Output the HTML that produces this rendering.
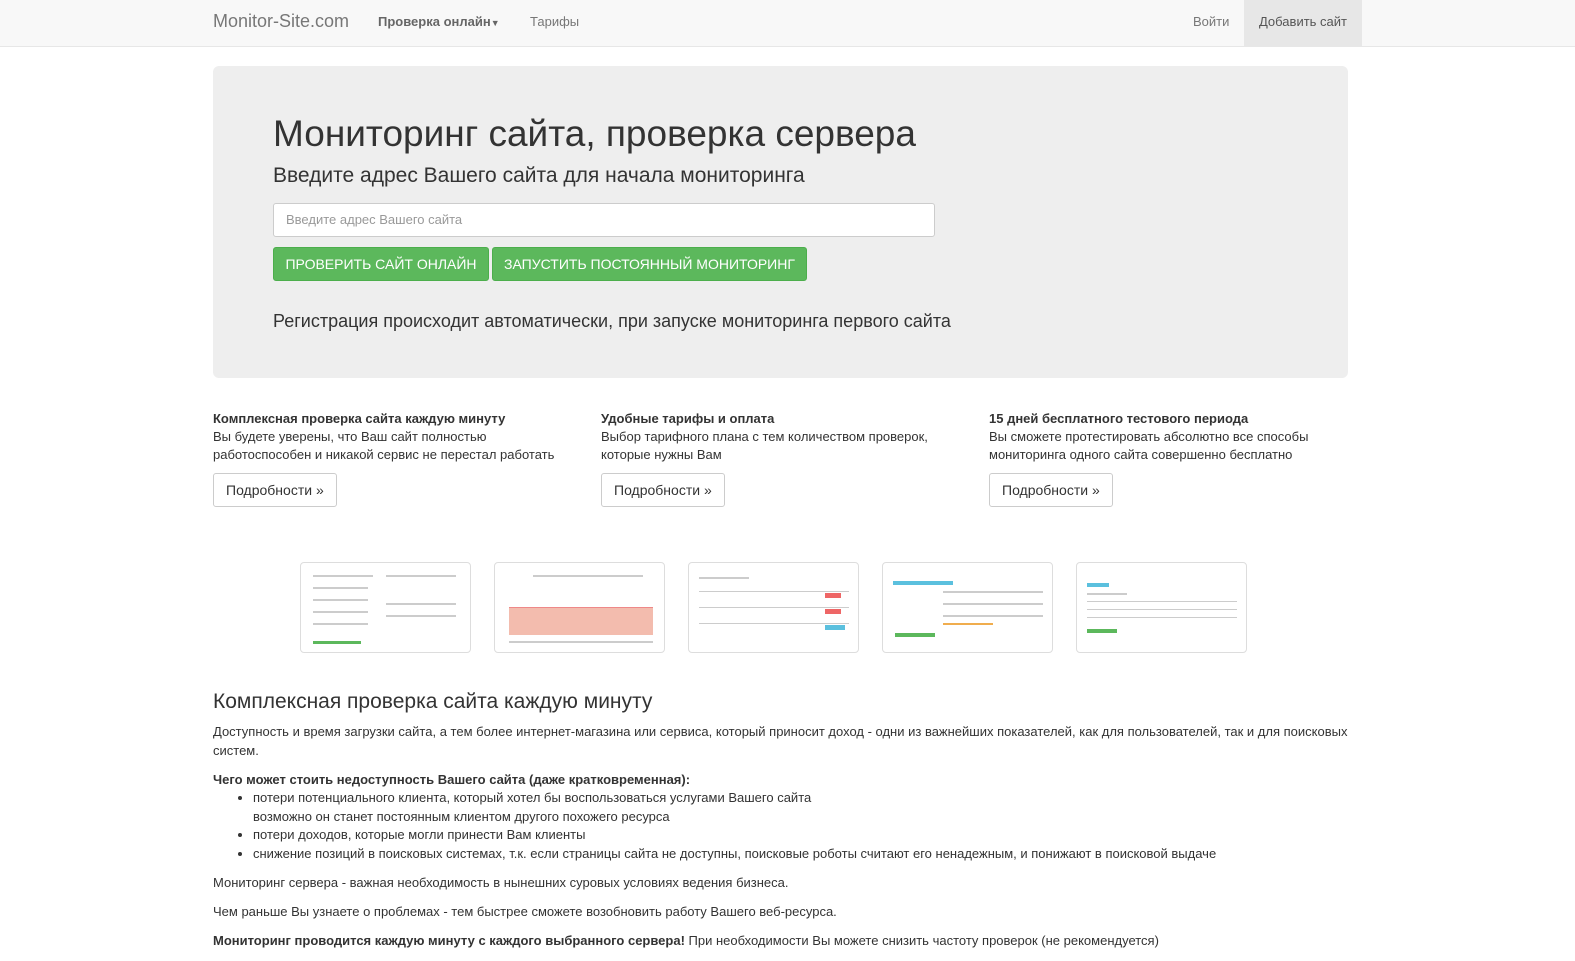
<!DOCTYPE html>
<html><head><meta charset="utf-8"><style>
*{box-sizing:border-box}
body{margin:0;font-family:"Liberation Sans",sans-serif;font-size:13px;line-height:18px;color:#333;background:#fff;width:1575px;height:938px;overflow:hidden}
.nav{height:47px;background:#f8f8f8;border-bottom:1px solid #e7e7e7;position:relative}
.nav a{position:absolute;top:0;line-height:43px;color:#777;text-decoration:none;font-size:13px}
.jumbo{position:absolute;left:213px;top:66px;width:1135px;height:312px;background:#eee;border-radius:6px}
h1{position:absolute;left:60px;top:45px;margin:0;font-size:37px;font-weight:normal;line-height:46px;color:#333}
.sub{position:absolute;left:60px;top:96px;font-size:21px;line-height:28px}
.inp{position:absolute;left:60px;top:137px;width:662px;height:34px;background:#fff;border:1px solid #ccc;border-radius:3px;padding:0 12px;line-height:32px;color:#999;font-size:13px}
.btn{position:absolute;top:181px;height:34px;background:#5cb85c;border:1px solid #4cae4c;border-radius:3px;color:#fff;font-size:14px;line-height:32px;text-align:center}
.reg{position:absolute;left:60px;top:243px;font-size:18px;line-height:24px}
.col{position:absolute;top:410px;width:370px}
.col b{display:block}
.col .b2{position:absolute;top:63px;left:0;height:34px;border:1px solid #ccc;border-radius:3px;padding:0 12px;line-height:32px;font-size:14px;background:#fff}
.th{position:absolute;top:562px;width:171px;height:91px;border:1px solid #ddd;border-radius:4px;background:#fff;overflow:hidden}
.th i{position:absolute;height:2px;background:#ccc;display:block}
h2{position:absolute;left:213px;top:688px;margin:0;font-size:21px;font-weight:normal;line-height:28px}
.txt{position:absolute;left:213px;top:723px;width:1140px;line-height:18.5px}
.txt p{margin:0 0 10.5px}
ul{margin:0;padding-left:40px}
</style></head><body>
<div class="nav">
<a style="left:213px;font-size:18px;color:#777">Monitor-Site.com</a>
<a style="left:378px;font-weight:bold;color:#666">Проверка онлайн<span style="font-size:9px">▼</span></a>
<a style="left:530px">Тарифы</a>
<a style="left:1193px">Войти</a>
<a style="left:1244px;width:118px;height:46px;background:#e7e7e7;text-align:center;color:#555">Добавить сайт</a>
</div>
<div class="jumbo">
<h1>Мониторинг сайта, проверка сервера</h1>
<div class="sub">Введите адрес Вашего сайта для начала мониторинга</div>
<div class="inp">Введите адрес Вашего сайта</div>
<div class="btn" style="left:60px;width:216px">ПРОВЕРИТЬ САЙТ ОНЛАЙН</div>
<div class="btn" style="left:279px;width:315px">ЗАПУСТИТЬ ПОСТОЯННЫЙ МОНИТОРИНГ</div>
<div class="reg">Регистрация происходит автоматически, при запуске мониторинга первого сайта</div>
</div>
<div class="col" style="left:213px"><b>Комплексная проверка сайта каждую минуту</b>Вы будете уверены, что Ваш сайт полностью работоспособен и никакой сервис не перестал работать<div class="b2">Подробности »</div></div>
<div class="col" style="left:601px"><b>Удобные тарифы и оплата</b>Выбор тарифного плана с тем количеством проверок, которые нужны Вам<div class="b2">Подробности »</div></div>
<div class="col" style="left:989px"><b>15 дней бесплатного тестового периода</b>Вы сможете протестировать абсолютно все способы мониторинга одного сайта совершенно бесплатно<div class="b2">Подробности »</div></div>

<div class="th" style="left:300px"><i style="left:12px;top:12px;width:60px"></i><i style="left:85px;top:12px;width:70px"></i><i style="left:12px;top:24px;width:55px"></i><i style="left:12px;top:36px;width:55px"></i><i style="left:12px;top:48px;width:55px"></i><i style="left:12px;top:60px;width:55px"></i><i style="left:85px;top:40px;width:70px"></i><i style="left:85px;top:52px;width:70px"></i><i style="left:12px;top:78px;width:48px;height:3px;background:#5cb85c"></i></div>
<div class="th" style="left:494px"><i style="left:38px;top:12px;width:110px"></i><div style="position:absolute;left:14px;top:44px;width:144px;height:28px;background:#f3bcae;border-top:1px solid #e88"></div><i style="left:14px;top:78px;width:144px"></i></div>
<div class="th" style="left:688px"><i style="left:10px;top:14px;width:50px"></i><i style="left:10px;top:28px;width:150px;height:1px"></i><i style="left:10px;top:44px;width:150px;height:1px"></i><i style="left:10px;top:60px;width:150px;height:1px"></i><i style="left:136px;top:30px;width:16px;height:5px;background:#e66"></i><i style="left:136px;top:46px;width:16px;height:5px;background:#e66"></i><i style="left:136px;top:62px;width:20px;height:5px;background:#5bc0de"></i></div>
<div class="th" style="left:882px"><i style="left:10px;top:18px;width:60px;height:4px;background:#5bc0de"></i><i style="left:60px;top:28px;width:100px"></i><i style="left:60px;top:40px;width:100px"></i><i style="left:60px;top:52px;width:100px"></i><i style="left:60px;top:60px;width:50px;background:#f0ad4e"></i><i style="left:12px;top:70px;width:40px;height:4px;background:#5cb85c"></i></div>
<div class="th" style="left:1076px"><i style="left:10px;top:20px;width:22px;height:4px;background:#5bc0de"></i><i style="left:10px;top:30px;width:40px"></i><i style="left:10px;top:38px;width:150px;height:1px"></i><i style="left:10px;top:46px;width:150px;height:1px"></i><i style="left:10px;top:54px;width:150px;height:1px"></i><i style="left:10px;top:66px;width:30px;height:4px;background:#5cb85c"></i></div>

<h2>Комплексная проверка сайта каждую минуту</h2>
<div class="txt">
<p>Доступность и время загрузки сайта, а тем более интернет-магазина или сервиса, который приносит доход - одни из важнейших показателей, как для пользователей, так и для поисковых систем.</p>
<b>Чего может стоить недоступность Вашего сайта (даже кратковременная):</b>
<ul style="margin-bottom:10.5px"><li>потери потенциального клиента, который хотел бы воспользоваться услугами Вашего сайта<br>возможно он станет постоянным клиентом другого похожего ресурса</li><li>потери доходов, которые могли принести Вам клиенты</li><li>снижение позиций в поисковых системах, т.к. если страницы сайта не доступны, поисковые роботы считают его ненадежным, и понижают в поисковой выдаче</li></ul>
<p>Мониторинг сервера - важная необходимость в нынешних суровых условиях ведения бизнеса.</p>
<p>Чем раньше Вы узнаете о проблемах - тем быстрее сможете возобновить работу Вашего веб-ресурса.</p>
<p><b>Мониторинг проводится каждую минуту с каждого выбранного сервера!</b> При необходимости Вы можете снизить частоту проверок (не рекомендуется)</p>
</div>
</body></html>
